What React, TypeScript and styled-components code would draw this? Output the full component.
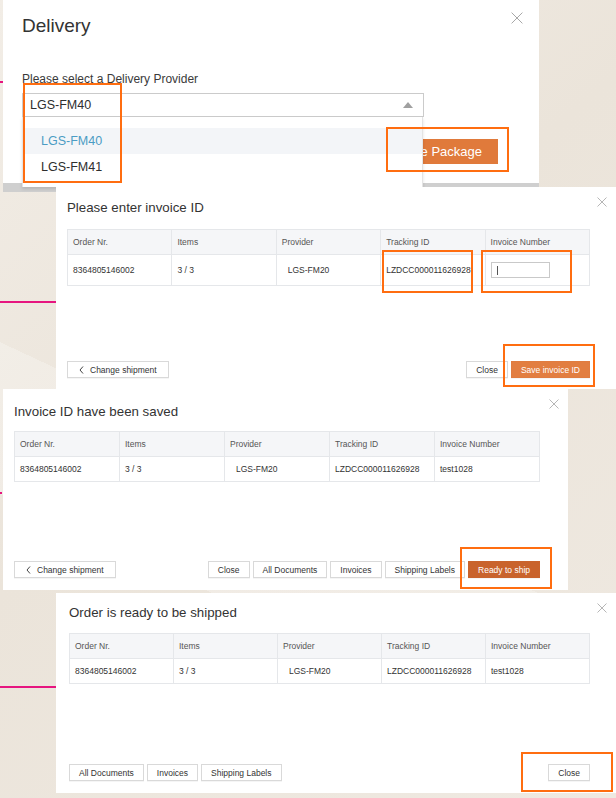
import React from "react";
import styled, { createGlobalStyle } from "styled-components";

const GlobalStyle = createGlobalStyle`
  html, body {
    margin: 0;
    padding: 0;
  }
  body {
    font-family: "Liberation Sans", Arial, sans-serif;
    background: #ece5db;
  }
  * {
    box-sizing: border-box;
  }
`;

const Canvas = styled.div`
  position: relative;
  width: 616px;
  height: 798px;
  overflow: hidden;
  background-color: #ece5db;
  background-image:
    linear-gradient(#e6157f, #e6157f),
    linear-gradient(#e6157f, #e6157f),
    linear-gradient(#e6157f, #e6157f),
    linear-gradient(#e6157f, #e6157f),
    linear-gradient(205deg, rgba(255, 255, 255, 0) 0 58%, rgba(255, 255, 255, 0.25) 58% 72%, rgba(255, 255, 255, 0) 72%),
    linear-gradient(140deg, #f2ede6 0%, #ebe4da 45%, #efe9e1 100%);
  background-size: 3px 2px, 56px 2px, 2px 2px, 56px 2px, 100% 100%, 100% 100%;
  background-position: 0 81px, 0 301px, 0 492px, 0 686px, 0 0, 0 0;
  background-repeat: no-repeat;
`;

/* ---------- shared bits ---------- */

const Highlight = styled.span<{ $top: number; $left: number; $w: number; $h: number }>`
  position: absolute;
  top: ${(p) => p.$top}px;
  left: ${(p) => p.$left}px;
  width: ${(p) => p.$w}px;
  height: ${(p) => p.$h}px;
  border: 2px solid #ff6d10;
  pointer-events: none;
  z-index: 5;
`;

const Marked = styled.span`
  position: relative;
  display: inline-flex;
`;

const CloseIcon = styled.button<{ $top: number; $right: number; $size: number }>`
  position: absolute;
  top: ${(p) => p.$top}px;
  right: ${(p) => p.$right}px;
  width: ${(p) => p.$size}px;
  height: ${(p) => p.$size}px;
  padding: 0;
  border: 0;
  background: none;
  display: flex;

  svg {
    width: 100%;
    height: 100%;
  }
`;

function CloseX({ top, right, size }: { top: number; right: number; size: number }) {
  return (
    <CloseIcon $top={top} $right={right} $size={size} aria-label="close">
      <svg viewBox="0 0 10 10">
        <path d="M0.5 0.5 L9.5 9.5 M9.5 0.5 L0.5 9.5" stroke="#a3a3a3" strokeWidth="0.8" fill="none" />
      </svg>
    </CloseIcon>
  );
}

/* ---------- delivery dialog ---------- */

const DeliveryWindow = styled.section`
  position: relative;
  z-index: 1;
  margin-left: 3px;
  width: 536px;
  height: 192px;
  background: #fff;
  border-bottom: 9px solid #cfcfcf;
  padding: 14px 0 0 19px;
  color: #333;
`;

const BigTitle = styled.h1`
  margin: 0;
  font-size: 19px;
  line-height: 24px;
  font-weight: normal;
  color: #333;
`;

const FieldLabel = styled.div`
  margin-top: 33px;
  font-size: 12px;
  line-height: 16px;
  color: #3a3a3a;
`;

const SelectBox = styled.div`
  position: relative;
  margin-top: 6px;
  width: 402px;
  height: 24px;
  border: 1px solid #cbcbcb;
  display: flex;
  align-items: center;
  justify-content: space-between;
  padding: 0 10px 0 7px;
  font-size: 12.5px;
  color: #2e2e2e;
`;

const Dropdown = styled.ul`
  position: absolute;
  top: 23px;
  left: -1px;
  width: 401px;
  height: 70px;
  margin: 0;
  padding: 11px 0 0;
  list-style: none;
  background: #fff;
  border-left: 1px solid #e4e4e4;
  border-right: 1px solid #e4e4e4;
  box-shadow: 0 2px 3px rgba(0, 0, 0, 0.12);
  z-index: 3;
`;

const Option = styled.li<{ $active?: boolean }>`
  height: 26px;
  line-height: 26px;
  padding-left: 18px;
  font-size: 12.5px;
  color: ${(p) => (p.$active ? "#4b9cc4" : "#2e2e2e")};
  background: ${(p) => (p.$active ? "#f3f5f8" : "#fff")};
`;

const ActionRow = styled.div`
  margin-top: 22px;
  display: flex;
  justify-content: flex-end;
  padding-right: 41px;
`;

const BigButton = styled.button`
  height: 25px;
  padding: 0 16px;
  border: 0;
  background: #e07a3b;
  color: #fff;
  font-family: inherit;
  font-size: 13px;
`;

function DeliveryDialog() {
  return (
    <DeliveryWindow>
      <CloseX top={12} right={16} size={12} />
      <BigTitle>Delivery</BigTitle>
      <FieldLabel>Please select a Delivery Provider</FieldLabel>
      <SelectBox>
        <span>LGS-FM40</span>
        <svg width="10" height="6" viewBox="0 0 10 6">
          <path d="M0 6 L5 0 L10 6 Z" fill="#a0a0a0" />
        </svg>
        <Dropdown>
          <Option $active>LGS-FM40</Option>
          <Option>LGS-FM41</Option>
        </Dropdown>
        <Highlight $top={-11} $left={0} $w={99} $h={100} />
      </SelectBox>
      <ActionRow>
        <Marked>
          <BigButton>Create Package</BigButton>
          <Highlight $top={-12} $left={13} $w={123} $h={45} />
        </Marked>
      </ActionRow>
    </DeliveryWindow>
  );
}

/* ---------- shipment dialogs ---------- */

type Frame = {
  offset: number;
  width: number;
  height: number;
  gap: number;
  pad: string;
  tableGap: number;
};

const Dialog = styled.section<{ $f: Frame }>`
  position: relative;
  z-index: 2;
  flex: none;
  margin-left: ${(p) => p.$f.offset}px;
  margin-top: ${(p) => p.$f.gap}px;
  width: ${(p) => p.$f.width}px;
  height: ${(p) => p.$f.height}px;
  padding: ${(p) => p.$f.pad};
  background: #fff;
  display: flex;
  flex-direction: column;
`;

const DialogTitle = styled.h2`
  margin: 0;
  font-size: 13.3px;
  line-height: 20px;
  font-weight: normal;
  color: #333;
`;

const Table = styled.table<{ $gap: number; $rowHeight: number }>`
  margin-top: ${(p) => p.$gap}px;
  width: 100%;
  table-layout: fixed;
  border-collapse: collapse;
  font-size: 8.5px;
  color: #333;

  th,
  td {
    border: 1px solid #e5e7ea;
    text-align: left;
    padding: 0 5px;
    font-weight: normal;
    white-space: nowrap;
  }

  th {
    height: 25px;
    background: #f5f6f8;
    color: #555;
  }

  td {
    position: relative;
    height: ${(p) => p.$rowHeight}px;
  }
`;

const Cell = styled.td<{ $indent?: boolean }>`
  && {
    padding-left: ${(p) => (p.$indent ? 11 : 5)}px;
  }
`;

const FakeInput = styled.div`
  position: relative;
  width: 59px;
  height: 16px;
  border: 1px solid #c9c9c9;
  background: #fff;
`;

const Caret = styled.span`
  position: absolute;
  left: 5px;
  top: 3px;
  width: 1px;
  height: 9px;
  background: #555;
`;

const Footer = styled.div`
  margin-top: auto;
  display: flex;
  justify-content: space-between;
  align-items: flex-end;
`;

const ButtonGroup = styled.div`
  display: flex;
  gap: 3px;
`;

const Button = styled.button<{ $tone?: "plain" | "primary" | "dark" }>`
  height: 17px;
  padding: 0 9px;
  display: inline-flex;
  align-items: center;
  gap: 6px;
  font-family: inherit;
  font-size: 8.5px;
  white-space: nowrap;
  border: 1px solid
    ${(p) => (p.$tone === "primary" ? "#e07c40" : p.$tone === "dark" ? "#c9632c" : "#d9d9d9")};
  background: ${(p) => (p.$tone === "primary" ? "#e27e41" : p.$tone === "dark" ? "#c9632c" : "#fff")};
  color: ${(p) => (p.$tone && p.$tone !== "plain" ? "#fff" : "#333")};
  box-shadow: 0 1px 0 rgba(0, 0, 0, 0.04);
`;

const BackButton = styled(Button)`
  padding: 0 11px;
`;

function ChangeShipment() {
  return (
    <BackButton>
      <svg width="5" height="8" viewBox="0 0 5 8">
        <path d="M4 0.5 L1 4 L4 7.5" stroke="#444" strokeWidth="1" fill="none" />
      </svg>
      Change shipment
    </BackButton>
  );
}

const ORDER = {
  order: "8364805146002",
  items: "3 / 3",
  provider: "LGS-FM20",
  tracking: "LZDCC000011626928",
};

type DialogProps = {
  frame: Frame;
  title: string;
  rowHeight?: number;
  markTracking?: boolean;
  invoice: React.ReactNode;
  invoiceMark?: boolean;
  left: React.ReactNode;
  right: React.ReactNode;
};

function ShipmentDialog({ frame, title, rowHeight = 25, markTracking, invoice, invoiceMark, left, right }: DialogProps) {
  return (
    <Dialog $f={frame}>
      <CloseX top={10} right={9} size={10} />
      <DialogTitle>{title}</DialogTitle>
      <Table $gap={frame.tableGap} $rowHeight={rowHeight}>
        <thead>
          <tr>
            <th>Order Nr.</th>
            <th>Items</th>
            <th>Provider</th>
            <th>Tracking ID</th>
            <th>Invoice Number</th>
          </tr>
        </thead>
        <tbody>
          <tr>
            <Cell>{ORDER.order}</Cell>
            <Cell>{ORDER.items}</Cell>
            <Cell $indent>{ORDER.provider}</Cell>
            <Cell>
              {ORDER.tracking}
              {markTracking && <Highlight $top={-5} $left={1} $w={91} $h={43} />}
            </Cell>
            <Cell>
              {invoice}
              {invoiceMark && <Highlight $top={-5} $left={-5} $w={91} $h={43} />}
            </Cell>
          </tr>
        </tbody>
      </Table>
      <Footer>
        <ButtonGroup>{left}</ButtonGroup>
        <ButtonGroup>{right}</ButtonGroup>
      </Footer>
    </Dialog>
  );
}

const Stack = styled.div`
  display: flex;
  flex-direction: column;
`;

export default function App() {
  return (
    <>
      <GlobalStyle />
      <Canvas>
        <Stack>
          <DeliveryDialog />

          <ShipmentDialog
            frame={{ offset: 56, width: 560, height: 202, gap: -5, pad: "11px 26px 11px 11px", tableGap: 11 }}
            title="Please enter invoice ID"
            rowHeight={31}
            markTracking
            invoiceMark
            invoice={
              <FakeInput>
                <Caret />
              </FakeInput>
            }
            left={<ChangeShipment />}
            right={
              <>
                <Button>Close</Button>
                <Marked>
                  <Button $tone="primary">Save invoice ID</Button>
                  <Highlight $top={-17} $left={-8} $w={92} $h={43} />
                </Marked>
              </>
            }
          />

          <ShipmentDialog
            frame={{ offset: 3, width: 565, height: 201, gap: 0, pad: "13px 28px 12px 11px", tableGap: 9 }}
            title="Invoice ID have been saved"
            invoice="test1028"
            left={<ChangeShipment />}
            right={
              <>
                <Button>Close</Button>
                <Button>All Documents</Button>
                <Button>Invoices</Button>
                <Button>Shipping Labels</Button>
                <Marked>
                  <Button $tone="dark">Ready to ship</Button>
                  <Highlight $top={-14} $left={-8} $w={92} $h={42} />
                </Marked>
              </>
            }
          />

          <ShipmentDialog
            frame={{ offset: 56, width: 560, height: 200, gap: 3, pad: "10px 26px 12px 13px", tableGap: 10 }}
            title="Order is ready to be shipped"
            invoice="test1028"
            left={
              <>
                <Button>All Documents</Button>
                <Button>Invoices</Button>
                <Button>Shipping Labels</Button>
              </>
            }
            right={
              <Marked>
                <Button>Close</Button>
                <Highlight $top={-12} $left={-27} $w={92} $h={40} />
              </Marked>
            }
          />
        </Stack>
      </Canvas>
    </>
  );
}
